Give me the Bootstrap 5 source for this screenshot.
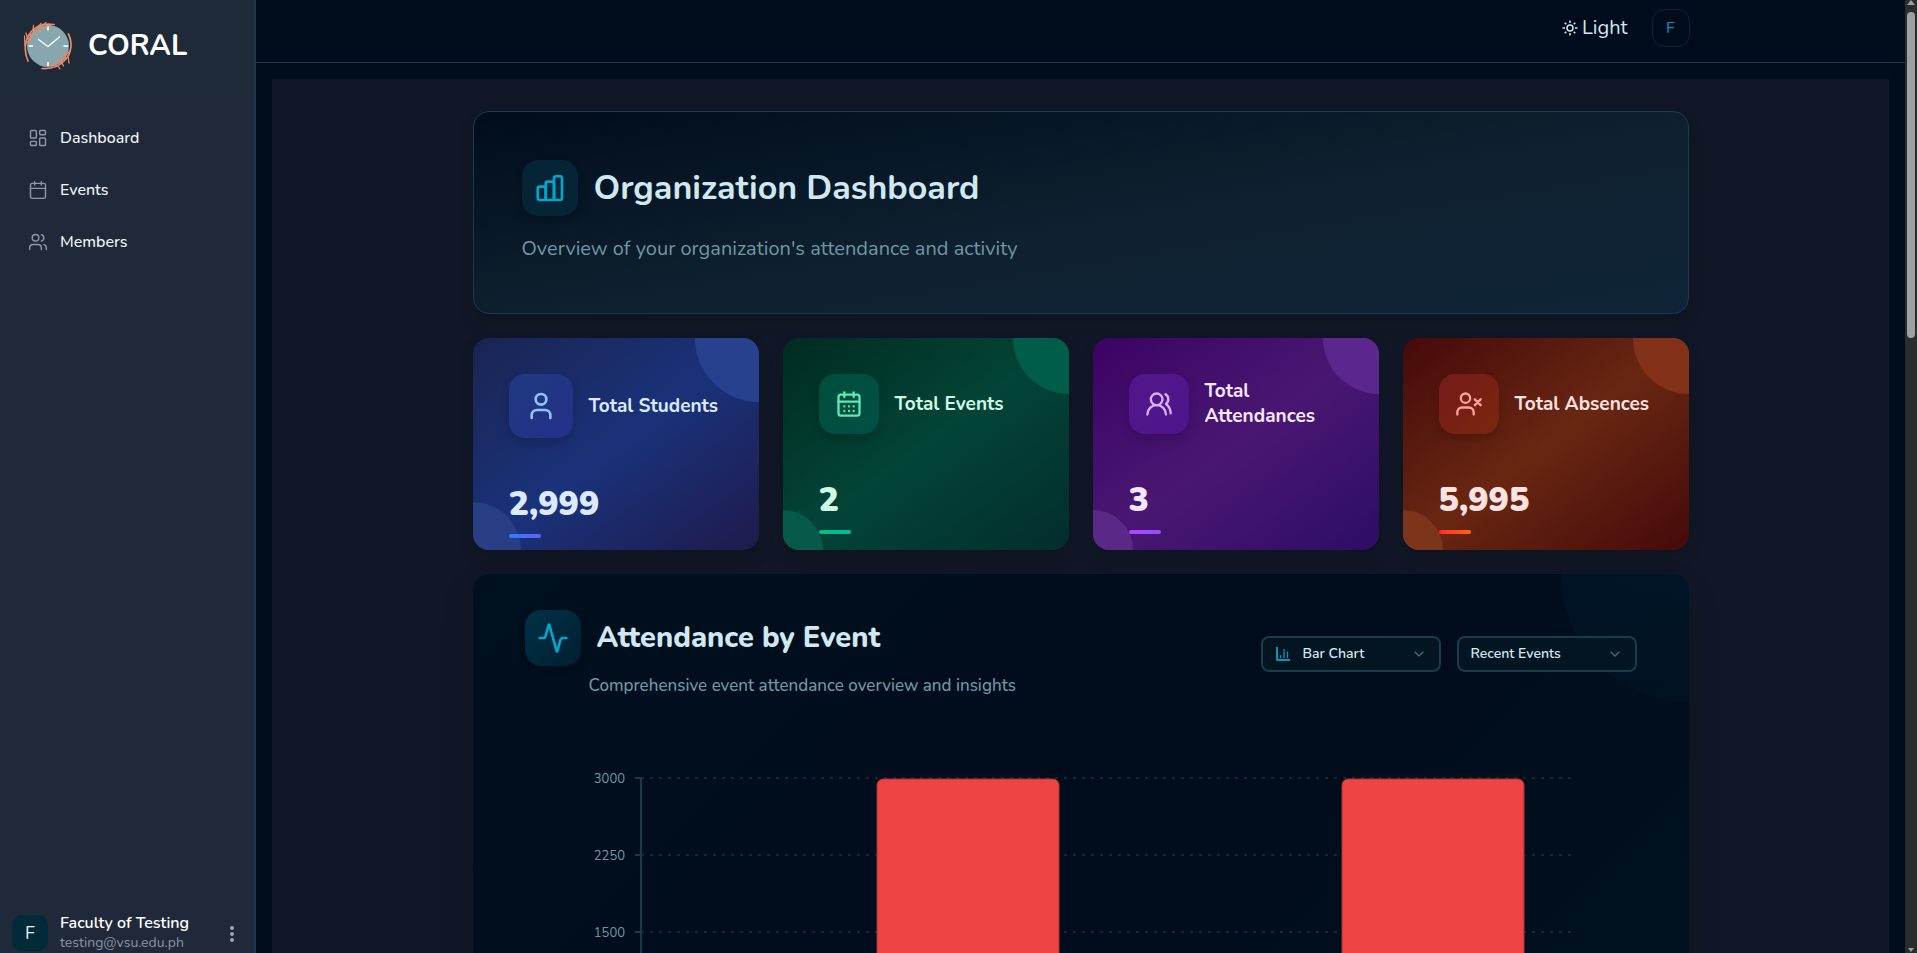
<!DOCTYPE html>
<html lang="en" data-bs-theme="dark">
<head>
<meta charset="utf-8">
<meta name="viewport" content="width=device-width, initial-scale=1">
<title>CORAL - Organization Dashboard</title>
<link rel="stylesheet" href="https://cdn.jsdelivr.net/npm/bootstrap@5.3.0/dist/css/bootstrap.min.css">
<style>
  :root {
    --ink: #cfe8f1;
    --ink-muted: #6f98a6;
    --accent: #00a6cc;
    --line: #183a4c;
  }
  body { font-family: Nunito, Lato, "Noto Sans", sans-serif; background: #000c1c; color: var(--ink); }
  h1, h2 { color: inherit; }
  svg.ico { fill: none; stroke: currentColor; stroke-width: 2; stroke-linecap: round; stroke-linejoin: round; flex: none; display: block; }

  /* Sidebar */
  .side { width: 256px; background: #1f2939; border-right: 2px solid var(--line); }
  .side-head { background: #1e2a37; padding: 22px 24px 28px; gap: 16px; color: #fff; }
  .side-head:hover { color: #fff; }
  .side-brand { font-size: 29px; line-height: 36px; font-weight: 700; }
  .side-nav { padding-top: 14px; }
  .side-link { height: 52px; gap: 12px; padding: 0 28px; color: #f3f6f9; font-weight: 500; }
  .side-link .ico { color: #8d97a8; stroke-width: 1.7; }
  .side-user { padding: 0 12px; gap: 12px; }
  .side-avatar { width: 36px; height: 36px; border-radius: 10px; background: #032a38; color: #e6f3f8; font-size: 18px; }
  .side-name { font-size: 16px; line-height: 20px; font-weight: 600; color: #fff; }
  .side-mail { font-size: 14px; line-height: 20px; color: #8a95a5; }

  /* Top bar */
  .topbar { height: 63px; border-bottom: 1px solid var(--line); padding: 0 0 6px 2px; }
  .wrap { width: 100%; max-width: 1280px; margin: 0 auto; padding: 0 32px; }
  .theme-btn { font-size: 20px; line-height: 24px; color: var(--ink); gap: 4px; }
  .theme-btn .ico { stroke-width: 1.5; stroke-linecap: butt; }
  .me-btn { width: 38px; height: 38px; border: 1px solid #06293a; border-radius: 12px; color: #0397bd; background: transparent; }

  .panel { background: #111726; margin: 16px 16px 0; padding-top: 32px; }

  /* Hero */
  .hero { border: 1px solid #1a3b4b; border-radius: 16px; padding: 48px; background: linear-gradient(to bottom right, #000c1c, #0f2130 55%, #0f2438); box-shadow: 0 8px 16px rgba(0,0,0,.15); }
  .tile { width: 56px; height: 56px; border-radius: 16px; color: var(--accent); box-shadow: 0 4px 8px rgba(0,0,0,.25); }
  .hero .tile { background: #052436; }
  .hero h1 { font-size: 34px; line-height: 44px; font-weight: 700; }
  .hero p { font-size: 20px; line-height: 33px; color: var(--ink-muted); }

  /* Stat cards */
  .stats { display: grid; grid-template-columns: repeat(4, minmax(0, 1fr)); gap: 24px; margin: 24px 0; }
  .stat { position: relative; overflow: hidden; border-radius: 16px; padding: 36px 36px 12px; background: linear-gradient(to bottom right, var(--a), var(--b), var(--c)); color: var(--t); box-shadow: 0 8px 16px rgba(0,0,0,.15); min-height: 212px; }
  .stat::before, .stat::after { content: ""; position: absolute; border-radius: 50%; }
  .stat::before { width: 112px; height: 112px; top: -56px; right: -56px; background: var(--o); }
  .stat::after { width: 80px; height: 80px; left: -40px; bottom: -40px; background: var(--o2); }
  .stat-ico { width: 60px; height: 60px; border-radius: 16px; flex: none; background: linear-gradient(to bottom right, var(--i1), var(--i2)); color: var(--i); box-shadow: 0 6px 10px rgba(0,0,0,.15); }
  .stat h2 { font-size: 19px; line-height: 25px; font-weight: 700; }
  .stat-num { position: relative; z-index: 1; margin-top: 46px; font-size: 34px; line-height: 40px; font-weight: 900; }
  .stat-bar { position: relative; z-index: 1; width: 32px; height: 4px; margin-top: 10px; border-radius: 2px; background: linear-gradient(to right, var(--u1), var(--u2)); }
  .stat-lg::before { width: 128px; height: 128px; top: -64px; right: -64px; }
  .stat-lg::after { width: 96px; height: 96px; left: -48px; bottom: -48px; }
  .stat-lg .stat-ico { width: 64px; height: 64px; }
  .s-blue { --a:#1a2452; --b:#1a327a; --c:#1f1a4c; --t:#dbeafe; --o:#27418f; --o2:#283e85; --i1:#1f3a80; --i2:#252f8a; --i:#8ec5ff; --u1:#2b7fff; --u2:#615fff; }
  .s-green { --a:#002b21; --b:#034437; --c:#022d2d; --t:#d0fae5; --o:#005d49; --o2:#075949; --i1:#004e3b; --i2:#005046; --i:#5ee9b5; --u1:#00bc7d; --u2:#00bba7; }
  .s-purple { --a:#3b0364; --b:#491772; --c:#2d0d64; --t:#f3e8ff; --o:#5b278e; --o2:#5a2886; --i1:#52188a; --i2:#4e148c; --i:#dab2ff; --u1:#ad46ff; --u2:#8e51ff; }
  .s-red { --a:#450a0a; --b:#692712; --c:#450a0a; --t:#ffe2e2; --o:#84311a; --o2:#7c351b; --i1:#761a1a; --i2:#7a270d; --i:#ffa2a2; --u1:#fb2c36; --u2:#ff6900; }

  /* Chart card */
  .chart-shade { border-radius: 16px; box-shadow: 0 16px 36px rgba(0,0,0,.12); }
  .chart-card { position: relative; overflow: hidden; border-radius: 16px; padding: 36px 52px; background: linear-gradient(135deg, #01101e, #000b1b 50%, #02131f); }
  .chart-card::before { content: ""; position: absolute; width: 256px; height: 256px; border-radius: 50%; top: -128px; right: -128px; background: linear-gradient(to bottom, rgba(0,60,90,.18) 40%, rgba(0,60,90,.06)); }
  .chart-card .tile { background: linear-gradient(to bottom right, #003245, #011e33); }
  .chart-card h2 { font-size: 29px; line-height: 36px; font-weight: 800; }
  .chart-card .sub { font-size: 17px; line-height: 24px; font-weight: 500; color: var(--ink-muted); margin: 8px 0 0 64px; }
  .pick { position: relative; width: 180px; }
  .pick .form-select { height: 36px; padding: 0 36px 0 12px; font-size: 14px; line-height: 30px; font-weight: 600; color: var(--ink); border: 2px solid #193c4c; border-radius: 8px; background-color: #031521;
    background-image: url("data:image/svg+xml,%3Csvg xmlns='http://www.w3.org/2000/svg' viewBox='0 0 24 24' fill='none' stroke='%234a6874' stroke-width='2' stroke-linecap='round' stroke-linejoin='round'%3E%3Cpath d='m6 9 6 6 6-6'/%3E%3C/svg%3E"); background-size: 16px; background-position: right 12px center; }
  .pick .has-ico { padding-left: 40px; }
  .pick svg { position: absolute; left: 14px; top: 10px; color: #0397bd; }
  .chart { display: block; width: 100%; margin-top: 60px; }
  .chart text { font-size: 13px; fill: #6f98a6; text-anchor: end; }

  /* Page scroll rail */
  .rail { width: 12px; background: #2c2c2c; }
  .rail span { display: block; width: 8px; height: 326px; border-radius: 4px; background: #9f9f9f; }
</style>
</head>
<body>
<div class="d-flex vh-100 overflow-hidden">

  <aside class="side d-flex flex-column flex-shrink-0">
    <a href="#" class="side-head d-flex align-items-center text-decoration-none">
      <svg width="48" height="48" viewBox="0 0 48 48" fill="none" aria-hidden="true">
        <circle cx="24" cy="24" r="21" fill="#87a6ad"/>
        <g stroke="#e88a6e" stroke-width="1.3" stroke-linecap="round">
          <path d="M4 39C-.5 29 .5 18 7 10 12 4 20 1 30 2.500" stroke-width="1.700"/>
          <path d="M1 24 .500 14M2 21l6-5M3.500 16 2 11M5 13l7-1M9 8 9.500 3.500M9 8l8 1M14 5l3-3.500M15 5l7 1M19 3l3-2.500M4 17l6-5M22 3l5 1"/>
          <path d="M44.500 12C48.500 20 48 31 41 38 36 44 28 47 18 46.500" stroke-width="1.700"/>
          <path d="M46 29l-4 4M44 34l1 7M42 37l-5 .5M38 41l1.500 3M38 41l-6-1M34 44l2 3M34 44l-7-1M42 36l-2-5M38 40l-2-5"/>
        </g>
        <path d="M24 4.500v4M24 40v4M4.500 24H9M39.500 24H44" stroke="#fff" stroke-width="1.600"/>
        <path d="m14.500 17.500 9.500 7 11.500-9.500" stroke="#fff" stroke-width="1.500" stroke-linecap="round" stroke-linejoin="round"/>
      </svg>
      <span class="side-brand">CORAL</span>
    </a>
    <nav class="side-nav nav flex-column flex-nowrap flex-grow-1">
      <a href="#" class="side-link d-flex align-items-center text-decoration-none">
        <svg class="ico" width="20" height="20" viewBox="0 0 24 24"><rect x="3" y="3" width="7" height="9" rx="1"/><rect x="14" y="3" width="7" height="5" rx="1"/><rect x="14" y="12" width="7" height="9" rx="1"/><rect x="3" y="16" width="7" height="5" rx="1"/></svg>
        Dashboard
      </a>
      <a href="#" class="side-link d-flex align-items-center text-decoration-none">
        <svg class="ico" width="20" height="20" viewBox="0 0 24 24"><path d="M8 2v4M16 2v4M3 10h18"/><rect x="3" y="4" width="18" height="18" rx="2"/></svg>
        Events
      </a>
      <a href="#" class="side-link d-flex align-items-center text-decoration-none">
        <svg class="ico" width="20" height="20" viewBox="0 0 24 24"><path d="M16 21v-2a4 4 0 0 0-4-4H6a4 4 0 0 0-4 4v2"/><circle cx="9" cy="7" r="4"/><path d="M22 21v-2a4 4 0 0 0-3-3.870M16 3.130a4 4 0 0 1 0 7.750"/></svg>
        Members
      </a>
    </nav>
    <div class="side-user d-flex align-items-center">
      <div class="side-avatar d-flex align-items-center justify-content-center">F</div>
      <div class="flex-grow-1">
        <div class="side-name">Faculty of Testing</div>
        <div class="side-mail">testing@vsu.edu.ph</div>
      </div>
      <button type="button" class="btn p-0 border-0" aria-label="Account options">
        <svg width="20" height="20" viewBox="0 0 20 20" fill="#9aa4b2"><circle cx="10" cy="4" r="2"/><circle cx="10" cy="10" r="2"/><circle cx="10" cy="16" r="2"/></svg>
      </button>
    </div>
  </aside>

  <div class="flex-grow-1 overflow-hidden">
    <header class="topbar d-flex align-items-center">
      <div class="wrap d-flex justify-content-end align-items-center gap-4">
        <button type="button" class="theme-btn btn p-0 border-0 d-flex align-items-center">
          <svg class="ico" width="16" height="16" viewBox="0 0 16 16"><circle cx="8" cy="8" r="3"/><path d="M8 .500V3M8 13v2.500M.500 8H3M13 8h2.500M2.700 2.700l1.600 1.600M11.700 11.700l1.600 1.600M2.700 13.300l1.600-1.600M11.700 4.300l1.600-1.600"/></svg>
          Light
        </button>
        <button type="button" class="me-btn p-0">F</button>
      </div>
    </header>

    <main class="panel">
      <div class="wrap">
        <section class="hero">
          <div class="d-flex align-items-center gap-3">
            <div class="tile d-flex align-items-center justify-content-center">
              <svg class="ico" width="32" height="32" viewBox="0 0 24 24"><rect x="2.800" y="11" width="6" height="10" rx="1.500"/><rect x="8.800" y="7.200" width="6.200" height="13.800" rx="1.500"/><rect x="15" y="3.200" width="6" height="17.800" rx="1.500"/></svg>
            </div>
            <h1 class="mb-0">Organization Dashboard</h1>
          </div>
          <p class="mt-3 mb-0">Overview of your organization's attendance and activity</p>
        </section>

        <section class="stats">
          <article class="stat stat-lg s-blue">
            <div class="d-flex align-items-center gap-3">
              <div class="stat-ico d-flex align-items-center justify-content-center">
                <svg class="ico" width="32" height="32" viewBox="0 0 24 24"><path d="M19 21v-2a4 4 0 0 0-4-4H9a4 4 0 0 0-4 4v2"/><circle cx="12" cy="7" r="4"/></svg>
              </div>
              <h2 class="mb-0">Total Students</h2>
            </div>
            <div class="stat-num">2,999</div>
            <div class="stat-bar"></div>
          </article>
          <article class="stat s-green">
            <div class="d-flex align-items-center gap-3">
              <div class="stat-ico d-flex align-items-center justify-content-center">
                <svg class="ico" width="28" height="28" viewBox="0 0 24 24"><path d="M8 2v4M16 2v4M3 10h18"/><rect x="3" y="4" width="18" height="18" rx="2"/><path d="M8 14h.010M12 14h.010M16 14h.010M8 18h.010M12 18h.010M16 18h.010"/></svg>
              </div>
              <h2 class="mb-0">Total Events</h2>
            </div>
            <div class="stat-num">2</div>
            <div class="stat-bar"></div>
          </article>
          <article class="stat s-purple">
            <div class="d-flex align-items-center gap-3">
              <div class="stat-ico d-flex align-items-center justify-content-center">
                <svg class="ico" width="28" height="28" viewBox="0 0 24 24"><path d="M18 21a8 8 0 0 0-16 0"/><circle cx="10" cy="8" r="5"/><path d="M22 20c0-3.370-2-6.500-4-8a5 5 0 0 0-.450-8.300"/></svg>
              </div>
              <h2 class="mb-0">Total Attendances</h2>
            </div>
            <div class="stat-num">3</div>
            <div class="stat-bar"></div>
          </article>
          <article class="stat s-red">
            <div class="d-flex align-items-center gap-3">
              <div class="stat-ico d-flex align-items-center justify-content-center">
                <svg class="ico" width="28" height="28" viewBox="0 0 24 24"><path d="M16 21v-2a4 4 0 0 0-4-4H6a4 4 0 0 0-4 4v2"/><circle cx="9" cy="7" r="4"/><path d="m17 8 5 5M22 8l-5 5"/></svg>
              </div>
              <h2 class="mb-0">Total Absences</h2>
            </div>
            <div class="stat-num">5,995</div>
            <div class="stat-bar"></div>
          </article>
        </section>

        <div class="chart-shade">
        <section class="chart-card">
          <div class="d-flex justify-content-between align-items-center">
            <div>
              <div class="d-flex align-items-center gap-3">
                <div class="tile d-flex align-items-center justify-content-center">
                  <svg class="ico" width="32" height="32" viewBox="0 0 24 24"><path d="M22 12h-2.480a2 2 0 0 0-1.930 1.460l-2.350 8.360a.25.25 0 0 1-.480 0L9.240 2.180a.25.25 0 0 0-.480 0l-2.350 8.360A2 2 0 0 1 4.490 12H2"/></svg>
                </div>
                <h2 class="mb-0">Attendance by Event</h2>
              </div>
              <p class="sub">Comprehensive event attendance overview and insights</p>
            </div>
            <div class="d-flex gap-3">
              <div class="pick">
                <select class="form-select has-ico" aria-label="Chart type"><option>Bar Chart</option><option>Line Chart</option></select>
                <svg width="16" height="16" viewBox="0 0 16 16" fill="none" stroke="currentColor" aria-hidden="true"><path d="M2 1v12.500q0 .500.500.500H15" stroke-width="2"/><path d="M5.500 9v3M9 3v9M12.500 5.500V12" stroke-width="1.300"/></svg>
              </div>
              <div class="pick">
                <select class="form-select" aria-label="Event range"><option>Recent Events</option><option>All Events</option></select>
              </div>
            </div>
          </div>
          <svg class="chart" viewBox="0 0 1112 360" role="img" aria-label="Attendance by event">
            <g stroke="#0e2938" stroke-width="2" stroke-dasharray="3 6">
              <path d="M116 20H1046M116 97H1046M116 174H1046M116 251H1046"/>
            </g>
            <path d="M110 20h6V328H110M110 97h6M110 174h6M110 251h6" fill="none" stroke="#183a4c" stroke-width="2"/>
            <text x="100" y="25">3000</text>
            <text x="100" y="102">2250</text>
            <text x="100" y="179">1500</text>
            <g fill="#ef4444" stroke="#a83238">
              <path d="M352 328V27a6 6 0 0 1 6-6H528a6 6 0 0 1 6 6V328z"/>
              <path d="M817 328V27a6 6 0 0 1 6-6H993a6 6 0 0 1 6 6V328z"/>
            </g>
          </svg>
        </section>
        </div>
      </div>
    </main>
  </div>

  <div class="rail d-flex flex-column align-items-center flex-shrink-0" aria-hidden="true">
    <svg width="12" height="12" viewBox="0 0 12 12"><path d="M2 5 6 0l4 5z" fill="#9f9f9f"/></svg>
    <span></span>
    <svg class="mt-auto" width="12" height="6" viewBox="0 0 12 6"><path d="M3 1h6L6 5z" fill="#9f9f9f"/></svg>
  </div>
</div>
<script src="https://cdn.jsdelivr.net/npm/bootstrap@5.3.0/dist/js/bootstrap.bundle.min.js"></script>
</body>
</html>
